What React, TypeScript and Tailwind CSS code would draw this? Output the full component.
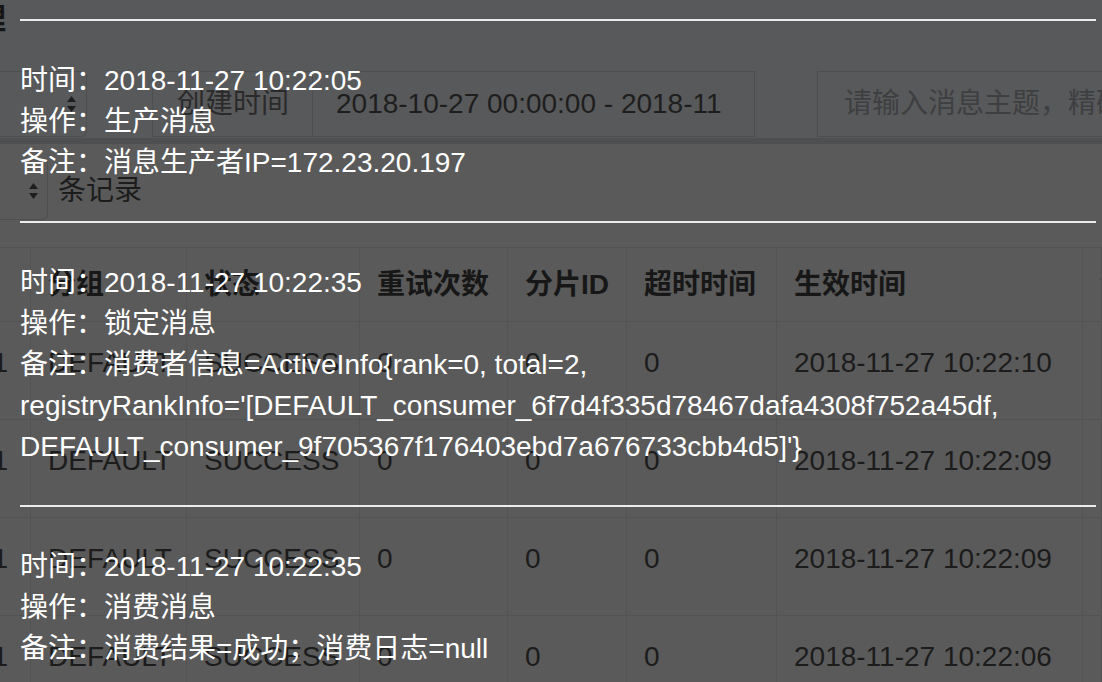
import React from "react";

const FONT = {
  fontFamily: '"Liberation Sans", "Noto Sans CJK SC", Arial, sans-serif',
};

const columns = ["", "分组", "状态", "重试次数", "分片ID", "超时时间", "生效时间", "创建时间"];

const rows = [
  ["1", "DEFAULT", "SUCCESS", "0", "0", "0", "2018-11-27 10:22:10", "2018-11-27 10:22:05"],
  ["1", "DEFAULT", "SUCCESS", "0", "0", "0", "2018-11-27 10:22:09", "2018-11-27 10:22:04"],
  ["1", "DEFAULT", "SUCCESS", "0", "0", "0", "2018-11-27 10:22:09", "2018-11-27 10:22:04"],
  ["1", "DEFAULT", "SUCCESS", "0", "0", "0", "2018-11-27 10:22:06", "2018-11-27 10:22:01"],
];

const logs: { time: string; op: string; note: string[] }[] = [
  {
    time: "2018-11-27 10:22:05",
    op: "生产消息",
    note: ["消息生产者IP=172.23.20.197"],
  },
  {
    time: "2018-11-27 10:22:35",
    op: "锁定消息",
    note: [
      "消费者信息=ActiveInfo{rank=0, total=2,",
      "registryRankInfo='[DEFAULT_consumer_6f7d4f335d78467dafa4308f752a45df,",
      "DEFAULT_consumer_9f705367f176403ebd7a676733cbb4d5]'}",
    ],
  },
  {
    time: "2018-11-27 10:22:35",
    op: "消费消息",
    note: ["消费结果=成功；消费日志=null"],
  },
];

function SelectArrows() {
  return (
    <svg width="11" height="18" viewBox="0 0 11 18" className="shrink-0">
      <path d="M5.5 1 L10 7 L1 7 Z" fill="#1e1e1e" />
      <path d="M5.5 17 L10 11 L1 11 Z" fill="#1e1e1e" />
    </svg>
  );
}

function BackgroundPage() {
  return (
    <div className="flex flex-col text-[28px] text-[#1c1c1c]">
      {/* title + toolbar */}
      <div className="bg-[#58595b]">
        <div className="h-[71px] overflow-hidden">
          <span className="-ml-[114px] -mt-[1px] block text-[30px] font-bold leading-[40px] text-[#151515]">
            消息管理
          </span>
        </div>
        <div className="flex h-[66px] items-stretch">
          <div className="flex w-[87px] items-center justify-end rounded-r-[6px] border border-l-0 border-[#4d4e50] pr-[9px]">
            <SelectArrows />
          </div>
          <div className="w-[65px]" />
          <div className="flex w-[161px] items-center border border-[#4d4e50] pl-[24px] text-[#2a2a2a]">
            创建时间
          </div>
          <div className="flex w-[442px] items-center overflow-hidden whitespace-nowrap border border-l-0 border-[#4d4e50] pl-[23px] text-[#1e1e1e]">
            2018-10-27 00:00:00 - 2018-11
          </div>
          <div className="w-[62px]" />
          <div className="flex flex-1 items-center overflow-hidden whitespace-nowrap border border-r-0 border-[#4d4e50] pl-[26px] text-[#3e3f41]">
            请输入消息主题，精确查询
          </div>
        </div>
        <div className="h-[1px]" />
      </div>
      <div className="h-[6px] bg-[#4e4f51]" />

      <div className="bg-[#5a5a5a]">
        <div className="flex h-[103px] items-start pt-[19px]">
          <div className="flex h-[57px] w-[48px] items-center justify-end rounded-br-[6px] border border-l-0 border-t-0 border-[#4f4f4f] pr-[8px]">
            <SelectArrows />
          </div>
          <span className="ml-[10px] mt-[8px] leading-[40px] text-[#1c1c1c]">条记录</span>
        </div>

        {/* table */}
        <div className="grid grid-cols-[31px_156px_173px_148px_119px_150px_306px_1fr] border-t border-[#535353]">
          {columns.map((c, i) => (
            <div
              key={"h" + i}
              className="flex h-[74px] items-center overflow-hidden whitespace-nowrap border-b border-r border-[#535353] pl-[17px] font-bold text-[#171717]"
            >
              {c}
            </div>
          ))}
          {rows.map((r, ri) =>
            r.map((cell, ci) => (
              <div
                key={ri + "-" + ci}
                className={
                  ci === 0
                    ? "flex h-[98px] justify-end overflow-hidden whitespace-nowrap border-b border-r border-[#535353] pr-[22px] pt-[21px] leading-[40px]"
                    : "h-[98px] overflow-hidden whitespace-nowrap border-b border-r border-[#535353] pl-[17px] pt-[21px] leading-[40px]"
                }
              >
                {cell}
              </div>
            ))
          )}
        </div>
      </div>
    </div>
  );
}

function LogOverlay() {
  return (
    <div className="absolute inset-0 pl-[20px] pr-[6px] pt-[19px] text-[28px] leading-[41px] text-white">
      {logs.map((log, i) => (
        <div key={i}>
          <div className="h-[2px] bg-[#ececec]" />
          <div className="whitespace-nowrap pb-[38px] pt-[39px]">
            <div>时间：{log.time}</div>
            <div>操作：{log.op}</div>
            {log.note.map((line, li) => (
              <div key={li}>
                {li === 0 ? "备注：" : ""}
                {line}
              </div>
            ))}
          </div>
        </div>
      ))}
    </div>
  );
}

export default function App() {
  return (
    <div
      className="relative h-[682px] w-[1102px] overflow-hidden bg-[#5a5a5a]"
      style={FONT}
    >
      <BackgroundPage />
      <LogOverlay />
    </div>
  );
}
